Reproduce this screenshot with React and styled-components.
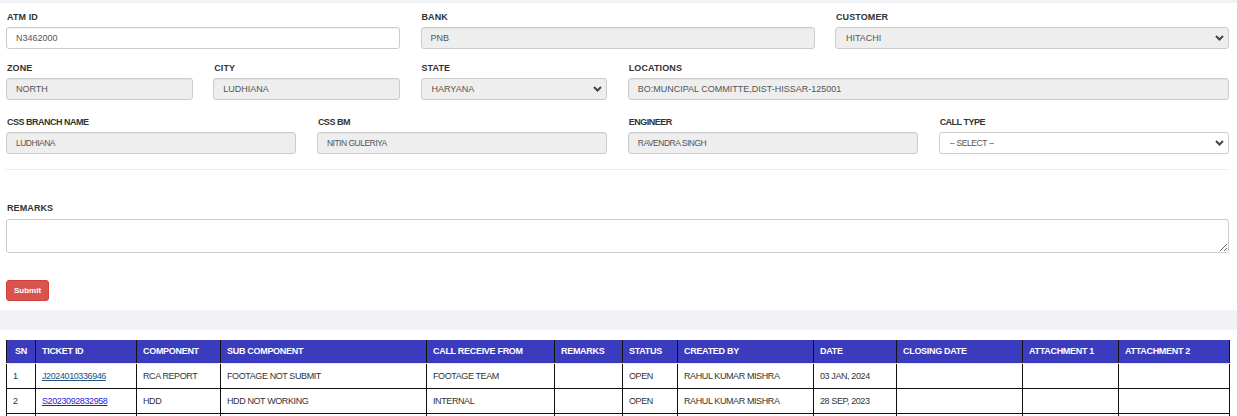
import React from 'react';
import styled, { createGlobalStyle } from 'styled-components';

const GlobalStyle = createGlobalStyle`
  body {
    margin: 0;
    background: #f1f2f6;
    font-family: "Liberation Sans", Arial, sans-serif;
    color: #333;
  }
`;

const Page = styled.div`
  padding-top: 3px;
`;

const FormPanel = styled.div`
  background: #fff;
  padding: 7px 8px 9px 6px;
`;

const Grid = styled.div`
  display: grid;
  grid-template-columns: repeat(12, 1fr);
  column-gap: 20.5px;
  margin-bottom: ${(p) => p.$mb || 0}px;
`;

const Field = styled.div`
  grid-column: span ${(p) => p.$span};
  min-width: 0;
`;

const Label = styled.div`
  font-size: 9px;
  letter-spacing: ${(p) => (p.$tight ? '-0.5px' : '0.1px')};
  font-weight: bold;
  color: #333;
  height: 14px;
  line-height: 14px;
  margin-bottom: ${(p) => p.$mb || 3}px;
  padding-left: 1px;
`;

const Input = styled.input`
  box-sizing: border-box;
  width: 100%;
  height: 22px;
  border: 1px solid #ccc;
  border-radius: 3px;
  background: ${(p) => (p.readOnly ? '#eee' : '#fff')};
  padding: 0 9px;
  font-family: inherit;
  font-size: ${(p) => (p.$tight ? 8.5 : 9)}px;
  letter-spacing: ${(p) => (p.$tight ? '-0.5px' : '0')};
  color: #555;
  box-shadow: inset 0 1px 1px rgba(0, 0, 0, 0.05);
  outline: none;
`;

const SelectWrap = styled.div`
  position: relative;
`;

const Select = styled.select`
  box-sizing: border-box;
  width: 100%;
  height: 22px;
  border: 1px solid #ccc;
  border-radius: 3px;
  background: ${(p) => (p.disabled ? '#eee' : '#fff')};
  padding: 0 0 0 10px;
  font-family: inherit;
  font-size: ${(p) => (p.$tight ? 8.5 : 9)}px;
  letter-spacing: ${(p) => (p.$tight ? '-0.4px' : '0')};
  color: #555;
  appearance: none;
  -webkit-appearance: none;
  outline: none;
  opacity: 1;
`;

const Chevron = styled.svg`
  position: absolute;
  right: 5px;
  top: 8px;
  pointer-events: none;
`;

const Divider = styled.div`
  height: 1px;
  background: #eee;
  margin: 15px 0 31px;
`;

const TextArea = styled.textarea`
  display: block;
  box-sizing: border-box;
  width: 100%;
  height: 34px;
  border: 1px solid #ccc;
  border-radius: 3px;
  resize: vertical;
  font-family: inherit;
  font-size: 9px;
  outline: none;
`;

const SubmitButton = styled.button`
  margin-top: 27px;
  width: 43px;
  height: 21px;
  background: #d9534f;
  border: 1px solid #d43f3a;
  border-radius: 3px;
  color: #fff;
  font-family: inherit;
  font-size: 8px;
  font-weight: bold;
  padding: 0;
`;

const TablePanel = styled.div`
  margin-top: 20px;
  background: #fff;
  padding: 10px 8px 0 6px;
`;

const Table = styled.table`
  width: 100%;
  border-collapse: collapse;
  table-layout: fixed;
  font-size: 9px;
`;

const Th = styled.th`
  box-sizing: border-box;
  width: ${(p) => p.$w}px;
  height: 23px;
  background: #3a3bbd;
  color: #fff;
  font-weight: bold;
  text-align: left;
  padding: 0 0 0 ${(p) => p.$pl || 6}px;
  border-left: 1px solid #111;
  border-right: 1px solid #111;
  border-bottom: 1px solid #e8e8f4;
  letter-spacing: -0.3px;
  white-space: nowrap;
  overflow: hidden;
`;

const Td = styled.td`
  height: 24px;
  padding: 0 0 0 6px;
  border: 1px solid #111;
  border-top: none;
  color: #333;
  letter-spacing: -0.4px;
  white-space: nowrap;
  overflow: hidden;
`;

const TicketLink = styled.a`
  color: ${(p) => (p.$visited ? '#23527c' : '#1d1de0')};
  text-decoration: underline;
`;

const ChevronIcon = () => (
  <Chevron width="9" height="6" viewBox="0 0 9 6">
    <path d="M1 1 L4.5 4.5 L8 1" fill="none" stroke="#444" strokeWidth="2" />
  </Chevron>
);

const Dropdown = ({ value, disabled, tight }) => (
  <SelectWrap>
    <Select disabled={disabled} $tight={tight} defaultValue={value}>
      <option>{value}</option>
    </Select>
    <ChevronIcon />
  </SelectWrap>
);

const columns = [
  ['SN', 29, 8],
  ['TICKET ID', 101],
  ['COMPONENT', 84],
  ['SUB COMPONENT', 206],
  ['CALL RECEIVE FROM', 128],
  ['REMARKS', 68],
  ['STATUS', 55],
  ['CREATED BY', 136],
  ['DATE', 83],
  ['CLOSING DATE', 126],
  ['ATTACHMENT 1', 96],
  ['ATTACHMENT 2', 111],
];

const tickets = [
  { sn: '1', id: 'J2024010336946', visited: true, comp: 'RCA REPORT', sub: 'FOOTAGE NOT SUBMIT', from: 'FOOTAGE TEAM', status: 'OPEN', by: 'RAHUL KUMAR MISHRA', date: '03 JAN, 2024' },
  { sn: '2', id: 'S2023092832958', comp: 'HDD', sub: 'HDD NOT WORKING', from: 'INTERNAL', status: 'OPEN', by: 'RAHUL KUMAR MISHRA', date: '28 SEP, 2023' },
  { sn: '', id: '', comp: '', sub: '', from: '', status: '', by: '', date: '' },
];

export default function App() {
  return (
    <Page>
      <GlobalStyle />
      <FormPanel>
        <Grid $mb={12}>
          <Field $span={4}>
            <Label>ATM ID</Label>
            <Input defaultValue="N3462000" />
          </Field>
          <Field $span={4}>
            <Label>BANK</Label>
            <Input readOnly defaultValue="PNB" />
          </Field>
          <Field $span={4}>
            <Label>CUSTOMER</Label>
            <Dropdown value="HITACHI" disabled />
          </Field>
        </Grid>
        <Grid $mb={15}>
          <Field $span={2}>
            <Label>ZONE</Label>
            <Input readOnly defaultValue="NORTH" />
          </Field>
          <Field $span={2}>
            <Label>CITY</Label>
            <Input readOnly defaultValue="LUDHIANA" />
          </Field>
          <Field $span={2}>
            <Label>STATE</Label>
            <Dropdown value="HARYANA" disabled />
          </Field>
          <Field $span={6}>
            <Label>LOCATIONS</Label>
            <Input readOnly defaultValue="BO:MUNCIPAL COMMITTE,DIST-HISSAR-125001" />
          </Field>
        </Grid>
        <Grid>
          <Field $span={3}>
            <Label $tight>CSS BRANCH NAME</Label>
            <Input readOnly $tight defaultValue="LUDHIANA" />
          </Field>
          <Field $span={3}>
            <Label $tight>CSS BM</Label>
            <Input readOnly $tight defaultValue="NITIN GULERIYA" />
          </Field>
          <Field $span={3}>
            <Label $tight>ENGINEER</Label>
            <Input readOnly $tight defaultValue="RAVENDRA SINGH" />
          </Field>
          <Field $span={3}>
            <Label $tight>CALL TYPE</Label>
            <Dropdown value="-- SELECT --" tight />
          </Field>
        </Grid>
        <Divider />
        <Label $mb={4}>REMARKS</Label>
        <TextArea />
        <SubmitButton>Submit</SubmitButton>
      </FormPanel>
      <TablePanel>
        <Table>
          <thead>
            <tr>
              {columns.map(([name, w, pl]) => (
                <Th key={name} $w={w} $pl={pl}>{name}</Th>
              ))}
            </tr>
          </thead>
          <tbody>
            {tickets.map((t, i) => (
              <tr key={i}>
                <Td>{t.sn}</Td>
                <Td>{t.id && <TicketLink href="#" $visited={t.visited}>{t.id}</TicketLink>}</Td>
                <Td>{t.comp}</Td>
                <Td>{t.sub}</Td>
                <Td>{t.from}</Td>
                <Td></Td>
                <Td>{t.status}</Td>
                <Td>{t.by}</Td>
                <Td>{t.date}</Td>
                <Td></Td>
                <Td></Td>
                <Td></Td>
              </tr>
            ))}
          </tbody>
        </Table>
      </TablePanel>
    </Page>
  );
}
